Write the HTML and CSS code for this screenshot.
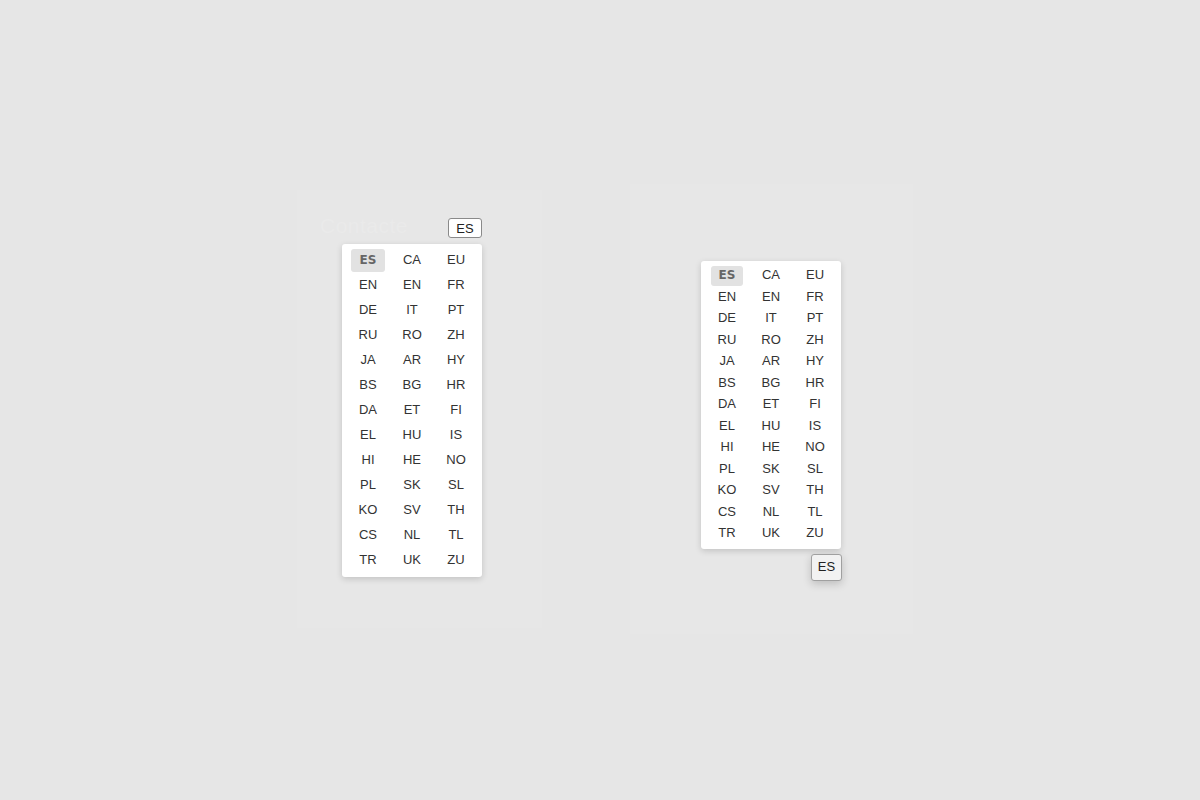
FILE: index.html
```html
<!DOCTYPE html>
<html>
<head>
<meta charset="utf-8">
<link rel="stylesheet" href="styles.css">
</head>
<body>
<div class="stage">
  <section class="panel panel-left">
    <div class="ghost">Contacte</div>
    <div class="widget">
      <button class="trigger trigger-top">ES</button>
      <div class="menu menu-lg">
        <span class="opt sel">ES</span><span class="opt">CA</span><span class="opt">EU</span>
        <span class="opt">EN</span><span class="opt">EN</span><span class="opt">FR</span>
        <span class="opt">DE</span><span class="opt">IT</span><span class="opt">PT</span>
        <span class="opt">RU</span><span class="opt">RO</span><span class="opt">ZH</span>
        <span class="opt">JA</span><span class="opt">AR</span><span class="opt">HY</span>
        <span class="opt">BS</span><span class="opt">BG</span><span class="opt">HR</span>
        <span class="opt">DA</span><span class="opt">ET</span><span class="opt">FI</span>
        <span class="opt">EL</span><span class="opt">HU</span><span class="opt">IS</span>
        <span class="opt">HI</span><span class="opt">HE</span><span class="opt">NO</span>
        <span class="opt">PL</span><span class="opt">SK</span><span class="opt">SL</span>
        <span class="opt">KO</span><span class="opt">SV</span><span class="opt">TH</span>
        <span class="opt">CS</span><span class="opt">NL</span><span class="opt">TL</span>
        <span class="opt">TR</span><span class="opt">UK</span><span class="opt">ZU</span>
      </div>
    </div>
  </section>
  <section class="panel panel-right">
    <div class="widget widget-right">
      <div class="menu menu-sm">
        <span class="opt sel">ES</span><span class="opt">CA</span><span class="opt">EU</span>
        <span class="opt">EN</span><span class="opt">EN</span><span class="opt">FR</span>
        <span class="opt">DE</span><span class="opt">IT</span><span class="opt">PT</span>
        <span class="opt">RU</span><span class="opt">RO</span><span class="opt">ZH</span>
        <span class="opt">JA</span><span class="opt">AR</span><span class="opt">HY</span>
        <span class="opt">BS</span><span class="opt">BG</span><span class="opt">HR</span>
        <span class="opt">DA</span><span class="opt">ET</span><span class="opt">FI</span>
        <span class="opt">EL</span><span class="opt">HU</span><span class="opt">IS</span>
        <span class="opt">HI</span><span class="opt">HE</span><span class="opt">NO</span>
        <span class="opt">PL</span><span class="opt">SK</span><span class="opt">SL</span>
        <span class="opt">KO</span><span class="opt">SV</span><span class="opt">TH</span>
        <span class="opt">CS</span><span class="opt">NL</span><span class="opt">TL</span>
        <span class="opt">TR</span><span class="opt">UK</span><span class="opt">ZU</span>
      </div>
      <button class="trigger trigger-bottom">ES</button>
    </div>
  </section>
</div>
</body>
</html>
```

FILE: styles.css
```css
html, body {
  margin: 0;
  padding: 0;
  background: #e6e6e6;
  font-family: "Liberation Sans", Arial, sans-serif;
  color: #333;
}

.stage {
  display: flex;
  align-items: flex-start;
  gap: 88px;
  padding-left: 297px;
  height: 800px;
  box-sizing: border-box;
}

.panel {
  background: #e7e7e7;
  box-sizing: border-box;
}

.panel-left {
  width: 245px;
  height: 438px;
  margin-top: 190px;
  padding: 28px 0 0 45px;
  position: relative;
}

.panel-right {
  width: 283px;
  height: 450px;
  margin-top: 184px;
  padding: 77px 0 0 71px;
}

.ghost {
  position: absolute;
  left: 23px;
  top: 24px;
  font-size: 21px;
  color: #eaeaea;
  letter-spacing: 0.5px;
}

.widget {
  width: 140px;
  display: flex;
  flex-direction: column;
  align-items: flex-end;
  position: relative;
}

.trigger {
  font-family: "Liberation Sans", Arial, sans-serif;
  font-size: 13px;
  color: #222;
  padding: 0;
  margin: 0;
  border-radius: 3px;
  cursor: pointer;
}

.trigger-top {
  width: 34px;
  height: 20px;
  background: #fff;
  border: 1px solid #8a8a8a;
  margin-bottom: 6px;
}

.trigger-bottom {
  width: 31px;
  height: 27px;
  background: #f2f2f2;
  border: 1px solid #a0a0a0;
  margin-top: 5px;
  margin-right: -1px;
  padding-bottom: 2px;
  box-shadow: 0 3px 8px rgba(0, 0, 0, 0.18);
}

.menu {
  width: 140px;
  box-sizing: border-box;
  background: #fff;
  border-radius: 3px;
  box-shadow: 0 2px 6px rgba(0, 0, 0, 0.16);
  display: grid;
  grid-template-columns: repeat(3, 34px);
  column-gap: 10px;
  padding: 5px 9px;
  font-size: 13px;
}

.menu-lg {
  grid-auto-rows: 23px;
  row-gap: 2px;
}

.menu-lg .opt {
  padding-bottom: 2px;
}

.menu-sm {
  grid-auto-rows: 20px;
  row-gap: 1.5px;
  grid-template-columns: repeat(3, 32px);
  column-gap: 12px;
  padding: 5px 10px;
}

.menu-sm .opt {
  padding-bottom: 3px;
}

.opt {
  display: flex;
  align-items: center;
  justify-content: center;
  color: #333;
  border-radius: 3px;
  box-sizing: border-box;
}

.opt.sel {
  background: #e2e2e2;
  color: #666;
  font-family: "DejaVu Sans", Verdana, sans-serif;
  font-weight: bold;
  font-size: 12px;
}
```
